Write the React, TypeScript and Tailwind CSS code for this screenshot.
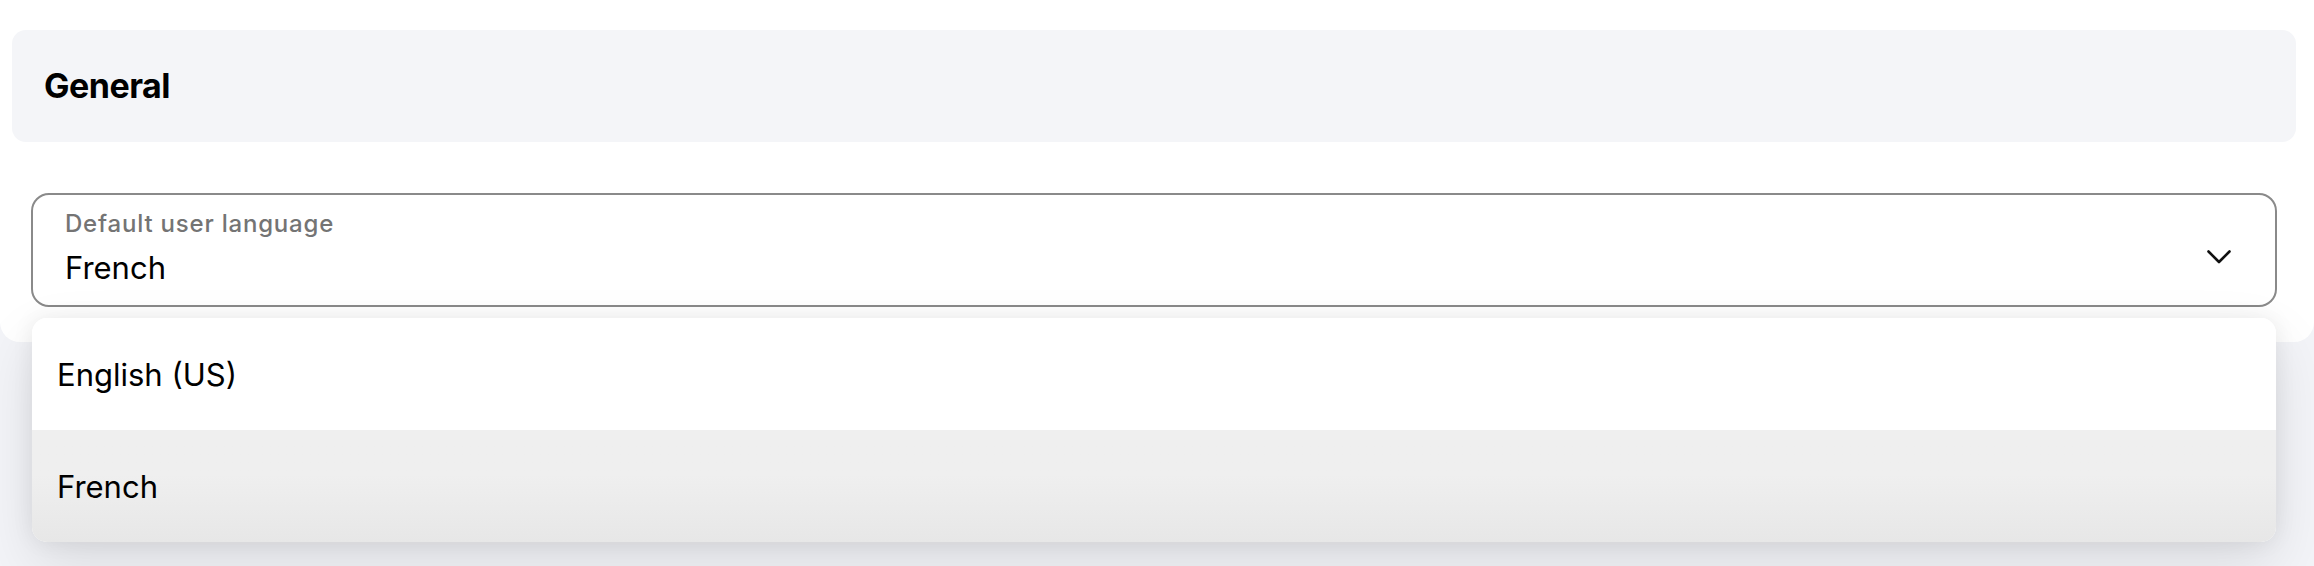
import React from "react";

export default function App() {
  return (
    <div
      className="relative min-h-[566px] w-full overflow-hidden bg-[#f3f4f8] text-black"
      style={{ fontFamily: "Inter, 'Noto Sans', sans-serif" }}
    >
      <div className="rounded-b-[20px] bg-white pb-[35px] pl-[12px] pr-[18px] pt-[30px]">
        <div className="flex h-[112px] items-center rounded-[14px] bg-[#f4f5f8] px-[32px]">
          <h2 className="text-[34px] font-bold leading-none tracking-[-0.5px] text-black">General</h2>
        </div>
        <div className="relative mx-[19px] mt-[51px]">
          <div className="flex h-[114px] items-start justify-between rounded-[18px] border-2 border-[#8a8a8a] bg-white pl-[32px] pr-[44px] pt-[15px]">
            <div className="flex flex-col gap-[11px]">
              <span className="text-[24px] font-medium leading-[28px] tracking-[0.8px] text-[#747474]">Default user language</span>
              <span className="text-[31px] leading-[38px] text-black">French</span>
            </div>
            <svg
              className="mt-[40px] shrink-0"
              width="24"
              height="14"
              viewBox="0 0 24 14"
              fill="none"
              stroke="#111"
              strokeWidth="2.6"
              strokeLinecap="round"
              strokeLinejoin="round"
            >
              <polyline points="1.5,1.5 12,12 22.5,1.5" />
            </svg>
          </div>
          <div className="absolute left-[1px] right-[1px] top-[125px] z-10 overflow-hidden rounded-[15px] bg-white shadow-[0_0_22px_rgba(0,0,0,0.07),0_24px_60px_rgba(0,0,0,0.1)]">
            <div className="flex h-[112px] items-center bg-white px-[25px]">
              <span className="text-[31px] leading-none text-black">English (US)</span>
            </div>
            <div className="flex h-[112px] items-center bg-gradient-to-b from-[#efefef] from-40% to-[#e7e7e7] px-[25px]">
              <span className="text-[31px] leading-none text-black">French</span>
            </div>
          </div>
        </div>
      </div>
    </div>
  );
}
